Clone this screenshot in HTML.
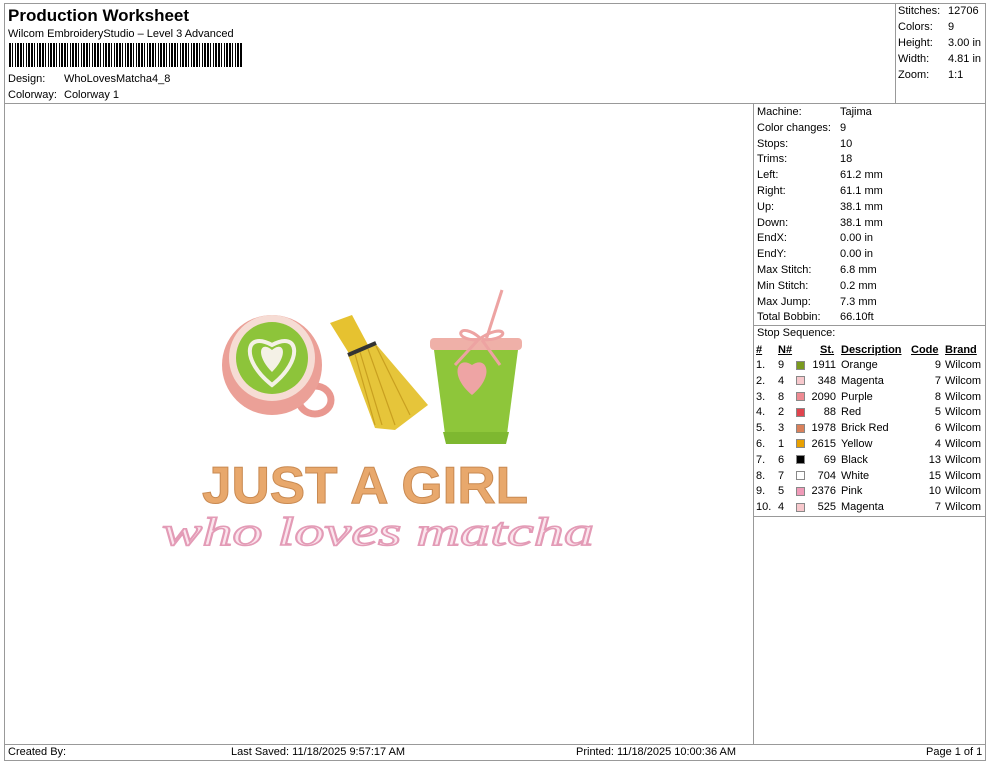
<!DOCTYPE html>
<html><head><meta charset="utf-8"><style>
body{margin:0;width:990px;height:762px;background:#fff;font-family:"Liberation Sans",sans-serif;font-size:11px;color:#000;position:relative;overflow:hidden}
.a{position:absolute;white-space:nowrap}
.l{position:absolute;background:#999}
.sw{position:absolute;width:9px;height:9px;border:1px solid #888;box-sizing:border-box}
.u{text-decoration:underline}
</style></head><body>
<div class="l" style="left:4px;top:3px;width:982px;height:1px"></div>
<div class="l" style="left:4px;top:3px;width:1px;height:758px"></div>
<div class="l" style="left:985px;top:3px;width:1px;height:758px"></div>
<div class="l" style="left:4px;top:760px;width:982px;height:1px"></div>
<div class="l" style="left:4px;top:103px;width:982px;height:1px"></div>
<div class="l" style="left:895px;top:3px;width:1px;height:100px"></div>
<div class="l" style="left:753px;top:103px;width:1px;height:641px"></div>
<div class="l" style="left:4px;top:744px;width:982px;height:1px"></div>
<div class="l" style="left:753px;top:325px;width:232px;height:1px"></div>
<div class="l" style="left:753px;top:516px;width:232px;height:1px"></div>

<div class="a" style="left:8px;top:6px;font-size:17px;font-weight:bold">Production Worksheet</div>
<div class="a" style="left:8px;top:28px">Wilcom EmbroideryStudio – Level 3 Advanced</div>
<div class="a" style="left:9px;top:43px;width:233px;height:24px;background:repeating-linear-gradient(90deg,#000 0 2px,#fff 2px 3px,#000 3px 4px,#fff 4px 6px,#000 6px 7px,#fff 7px 8px,#000 8px 10px,#fff 10px 11px)"></div>
<div class="a" style="left:8px;top:73px">Design:</div><div class="a" style="left:64px;top:73px">WhoLovesMatcha4_8</div>
<div class="a" style="left:8px;top:89px">Colorway:</div><div class="a" style="left:64px;top:89px">Colorway 1</div>

<div class="a" style="left:898px;top:5px">Stitches:</div><div class="a" style="left:948px;top:5px">12706</div>
<div class="a" style="left:898px;top:21px">Colors:</div><div class="a" style="left:948px;top:21px">9</div>
<div class="a" style="left:898px;top:37px">Height:</div><div class="a" style="left:948px;top:37px">3.00 in</div>
<div class="a" style="left:898px;top:53px">Width:</div><div class="a" style="left:948px;top:53px">4.81 in</div>
<div class="a" style="left:898px;top:69px">Zoom:</div><div class="a" style="left:948px;top:69px">1:1</div>

<div style="position:absolute;left:757px;top:105px;line-height:15.8px">
Machine:<br>Color changes:<br>Stops:<br>Trims:<br>Left:<br>Right:<br>Up:<br>Down:<br>EndX:<br>EndY:<br>Max Stitch:<br>Min Stitch:<br>Max Jump:<br>Total Bobbin:<br>Stop Sequence:</div>
<div style="position:absolute;left:840px;top:105px;line-height:15.8px">
Tajima<br>9<br>10<br>18<br>61.2 mm<br>61.1 mm<br>38.1 mm<br>38.1 mm<br>0.00 in<br>0.00 in<br>6.8 mm<br>0.2 mm<br>7.3 mm<br>66.10ft</div>

<div style="position:absolute;left:756px;top:343px;line-height:15.8px;font-weight:bold">
<span class="a u" style="left:0">#</span><span class="a u" style="left:22px">N#</span><span class="a u" style="left:64px">St.</span><span class="a u" style="left:85px">Description</span><span class="a u" style="left:155px">Code</span><span class="a u" style="left:189px">Brand</span></div>
<div style="position:absolute;left:756px;top:358px;line-height:15.8px">
<div class="a" style="left:0">1.<br>2.<br>3.<br>4.<br>5.<br>6.<br>7.<br>8.<br>9.<br>10.</div>
<div class="a" style="left:22px">9<br>4<br>8<br>2<br>3<br>1<br>6<br>7<br>5<br>4</div>
<div class="a" style="left:50px;width:30px;text-align:right">1911<br>348<br>2090<br>88<br>1978<br>2615<br>69<br>704<br>2376<br>525</div>
<div class="a" style="left:85px">Orange<br>Magenta<br>Purple<br>Red<br>Brick Red<br>Yellow<br>Black<br>White<br>Pink<br>Magenta</div>
<div class="a" style="left:160px;width:25px;text-align:right">9<br>7<br>8<br>5<br>6<br>4<br>13<br>15<br>10<br>7</div>
<div class="a" style="left:189px">Wilcom<br>Wilcom<br>Wilcom<br>Wilcom<br>Wilcom<br>Wilcom<br>Wilcom<br>Wilcom<br>Wilcom<br>Wilcom</div>
</div>
<div class="sw" style="left:796px;top:361px;background:#7a9a1e"></div>
<div class="sw" style="left:796px;top:376px;background:#f7c8cc"></div>
<div class="sw" style="left:796px;top:392px;background:#ee8a92"></div>
<div class="sw" style="left:796px;top:408px;background:#e0444e"></div>
<div class="sw" style="left:796px;top:424px;background:#d9805a"></div>
<div class="sw" style="left:796px;top:439px;background:#e8a000"></div>
<div class="sw" style="left:796px;top:455px;background:#000"></div>
<div class="sw" style="left:796px;top:471px;background:#fff"></div>
<div class="sw" style="left:796px;top:487px;background:#f09ab8"></div>
<div class="sw" style="left:796px;top:503px;background:#f7c8cc"></div>

<div class="a" style="left:8px;top:746px">Created By:</div>
<div class="a" style="left:231px;top:746px">Last Saved: 11/18/2025 9:57:17 AM</div>
<div class="a" style="left:576px;top:746px">Printed: 11/18/2025 10:00:36 AM</div>
<div class="a" style="left:926px;top:746px">Page 1 of 1</div>

<svg class="a" style="left:150px;top:280px" width="460" height="290" viewBox="150 280 460 290">
<ellipse cx="315" cy="400" rx="16" ry="14" fill="none" stroke="#e99890" stroke-width="7"/>
<circle cx="272" cy="365" r="50" fill="#eba097"/>
<circle cx="272" cy="358" r="43" fill="#f6dcd4"/>
<circle cx="272" cy="358" r="36" fill="#8dc43a"/>
<path d="M272 385 C240 360 245 330 272 345 C299 330 304 360 272 385Z" fill="none" stroke="#f4f1e6" stroke-width="4"/>
<path d="M272 372 C255 355 260 340 272 350 C284 340 289 355 272 372Z" fill="#f4f1e6"/>
<path d="M330 323 L352 315 L368 345 L350 355Z" fill="#e6c230"/>
<path d="M348 355 L375 343 L428 405 L395 430 L375 428Z" fill="#e6c53a"/>
<path d="M348 355 L376 343" stroke="#333" stroke-width="4"/>
<g stroke="#c9a020" stroke-width="1.2"><path d="M360 352 L382 425"/><path d="M368 349 L395 425"/><path d="M376 346 L410 415"/><path d="M355 354 L375 425"/></g>
<path d="M502 290 L486 340" stroke="#eda3a2" stroke-width="3"/>
<rect x="430" y="338" width="92" height="12" rx="4" fill="#efb0a8"/>
<path d="M434 350 L518 350 L506 442 L446 442Z" fill="#8ec63a"/>
<path d="M443 432 L509 432 L506 444 L446 444Z" fill="#7eb830"/>
<path d="M472 365 C458 355 448 375 472 395 C496 375 486 355 472 365Z" fill="#eea4a4"/>
<path d="M480 338 C460 320 450 340 478 340 C505 320 515 340 482 340 M478 340 L455 365 M482 340 L500 365" fill="none" stroke="#eda3a2" stroke-width="3"/>
<text x="202" y="503" font-family="Liberation Sans" font-weight="bold" font-size="52" fill="#e8a86c" stroke="#c98a52" stroke-width="1" textLength="326" lengthAdjust="spacingAndGlyphs">JUST A GIRL</text>
<text x="162" y="545" font-family="Liberation Serif" font-style="italic" font-size="40" fill="#fbe6ee" stroke="#e39bb6" stroke-width="1.5" textLength="432" lengthAdjust="spacingAndGlyphs">who loves matcha</text>
</svg>
</body></html>
